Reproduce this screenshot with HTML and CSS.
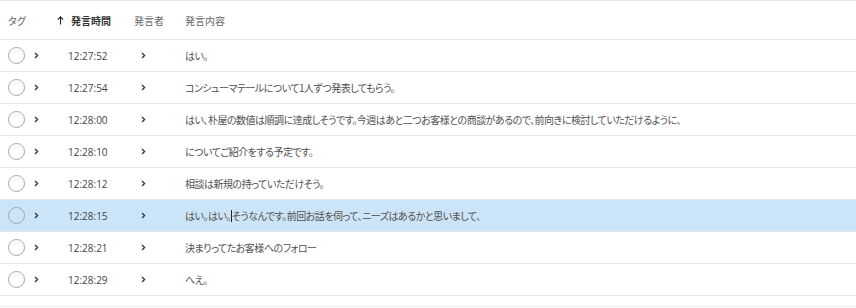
FILE: index.html
```html
<!DOCTYPE html>
<html lang="ja">
<head>
    <meta charset="UTF-8">
    <title>発言一覧</title>
    <link rel="stylesheet" href="styles.css">
</head>
<body>
    <div class="list">
        <div class="head">
            <div class="cell">タグ</div>
            <div class="cell sorted">
                <svg class="arrow" width="7" height="9" viewBox="0 0 7 9"><path d="M3.5 8.5V1M0.8 3.6L3.5 0.9L6.2 3.6" fill="none" stroke="#222" stroke-width="1.1"/></svg>
                発言時間
            </div>
            <div class="cell">発言者</div>
            <div class="cell">発言内容</div>
        </div>

        <div class="row">
            <div class="cell tag"><span class="check"></span><svg class="chev" width="5" height="7" viewBox="0 0 5 7"><path d="M1 1L3.6 3.5L1 6" fill="none" stroke="#333" stroke-width="1.3"/></svg></div>
            <div class="cell time">12:27:52</div>
            <div class="cell who"><svg class="chev" width="5" height="7" viewBox="0 0 5 7"><path d="M1 1L3.6 3.5L1 6" fill="none" stroke="#333" stroke-width="1.3"/></svg></div>
            <div class="cell say">はい。</div>
        </div>
        <div class="row">
            <div class="cell tag"><span class="check"></span><svg class="chev" width="5" height="7" viewBox="0 0 5 7"><path d="M1 1L3.6 3.5L1 6" fill="none" stroke="#333" stroke-width="1.3"/></svg></div>
            <div class="cell time">12:27:54</div>
            <div class="cell who"><svg class="chev" width="5" height="7" viewBox="0 0 5 7"><path d="M1 1L3.6 3.5L1 6" fill="none" stroke="#333" stroke-width="1.3"/></svg></div>
            <div class="cell say">コンシューマテールについて1人ずつ発表してもらう。</div>
        </div>
        <div class="row">
            <div class="cell tag"><span class="check"></span><svg class="chev" width="5" height="7" viewBox="0 0 5 7"><path d="M1 1L3.6 3.5L1 6" fill="none" stroke="#333" stroke-width="1.3"/></svg></div>
            <div class="cell time">12:28:00</div>
            <div class="cell who"><svg class="chev" width="5" height="7" viewBox="0 0 5 7"><path d="M1 1L3.6 3.5L1 6" fill="none" stroke="#333" stroke-width="1.3"/></svg></div>
            <div class="cell say">はい、朴屋の数値は順調に達成しそうです。今週はあと二つお客様との商談があるので、前向きに検討していただけるように、</div>
        </div>
        <div class="row">
            <div class="cell tag"><span class="check"></span><svg class="chev" width="5" height="7" viewBox="0 0 5 7"><path d="M1 1L3.6 3.5L1 6" fill="none" stroke="#333" stroke-width="1.3"/></svg></div>
            <div class="cell time">12:28:10</div>
            <div class="cell who"><svg class="chev" width="5" height="7" viewBox="0 0 5 7"><path d="M1 1L3.6 3.5L1 6" fill="none" stroke="#333" stroke-width="1.3"/></svg></div>
            <div class="cell say">についてご紹介をする予定です。</div>
        </div>
        <div class="row">
            <div class="cell tag"><span class="check"></span><svg class="chev" width="5" height="7" viewBox="0 0 5 7"><path d="M1 1L3.6 3.5L1 6" fill="none" stroke="#333" stroke-width="1.3"/></svg></div>
            <div class="cell time">12:28:12</div>
            <div class="cell who"><svg class="chev" width="5" height="7" viewBox="0 0 5 7"><path d="M1 1L3.6 3.5L1 6" fill="none" stroke="#333" stroke-width="1.3"/></svg></div>
            <div class="cell say">相談は新規の持っていただけそう。</div>
        </div>
        <div class="row active">
            <div class="cell tag"><span class="check"></span><svg class="chev" width="5" height="7" viewBox="0 0 5 7"><path d="M1 1L3.6 3.5L1 6" fill="none" stroke="#333" stroke-width="1.3"/></svg></div>
            <div class="cell time">12:28:15</div>
            <div class="cell who"><svg class="chev" width="5" height="7" viewBox="0 0 5 7"><path d="M1 1L3.6 3.5L1 6" fill="none" stroke="#333" stroke-width="1.3"/></svg></div>
            <div class="cell say">はい。はい。<span class="caret"></span>そうなんです。前回お話を伺って、ニーズはあるかと思いまして、</div>
        </div>
        <div class="row">
            <div class="cell tag"><span class="check"></span><svg class="chev" width="5" height="7" viewBox="0 0 5 7"><path d="M1 1L3.6 3.5L1 6" fill="none" stroke="#333" stroke-width="1.3"/></svg></div>
            <div class="cell time">12:28:21</div>
            <div class="cell who"><svg class="chev" width="5" height="7" viewBox="0 0 5 7"><path d="M1 1L3.6 3.5L1 6" fill="none" stroke="#333" stroke-width="1.3"/></svg></div>
            <div class="cell say">決まりってたお客様へのフォロー</div>
        </div>
        <div class="row">
            <div class="cell tag"><span class="check"></span><svg class="chev" width="5" height="7" viewBox="0 0 5 7"><path d="M1 1L3.6 3.5L1 6" fill="none" stroke="#333" stroke-width="1.3"/></svg></div>
            <div class="cell time">12:28:29</div>
            <div class="cell who"><svg class="chev" width="5" height="7" viewBox="0 0 5 7"><path d="M1 1L3.6 3.5L1 6" fill="none" stroke="#333" stroke-width="1.3"/></svg></div>
            <div class="cell say">へえ。</div>
        </div>
        <div class="foot"></div>
    </div>
</body>
</html>
```

FILE: styles.css
```css
body {
    margin: 0;
    background: #fff;
    font-family: "Noto Sans CJK JP", "Noto Sans", sans-serif;
    font-size: 10px;
    color: #505050;
    font-feature-settings: "palt";
}

.list {
    border-top: 1px solid #e6e6e6;
}

.head,
.row {
    display: grid;
    grid-template-columns: 48px 78px 51px 1fr;
    padding-left: 8px;
    align-items: center;
    border-bottom: 1px solid #e6e6e6;
}

.head {
    height: 38px;
    color: #666;
}

.head .sorted {
    display: flex;
    align-items: center;
    gap: 7px;
    padding-left: 1px;
    font-weight: bold;
    color: #333;
}

.row {
    height: 31px;
}

.row.active {
    background: #cce4f7;
}

.cell {
    white-space: nowrap;
}

.tag {
    display: flex;
    align-items: center;
    gap: 9px;
}

.check {
    width: 15px;
    height: 15px;
    border: 1.3px solid #a6a6a6;
    border-radius: 50%;
    box-sizing: content-box;
}

.chev {
    display: block;
}

.time {
    padding-left: 12px;
    font-family: "Open Sans", "Noto Sans", sans-serif;
    color: #444;
}

.who {
    padding-left: 7px;
}

.say {
    letter-spacing: -0.5px;
}

.caret {
    display: inline-block;
    width: 1px;
    height: 12px;
    background: #222;
    vertical-align: -2px;
}

.foot {
    height: 10px;
    border-bottom: 1px solid #ececec;
}
```
